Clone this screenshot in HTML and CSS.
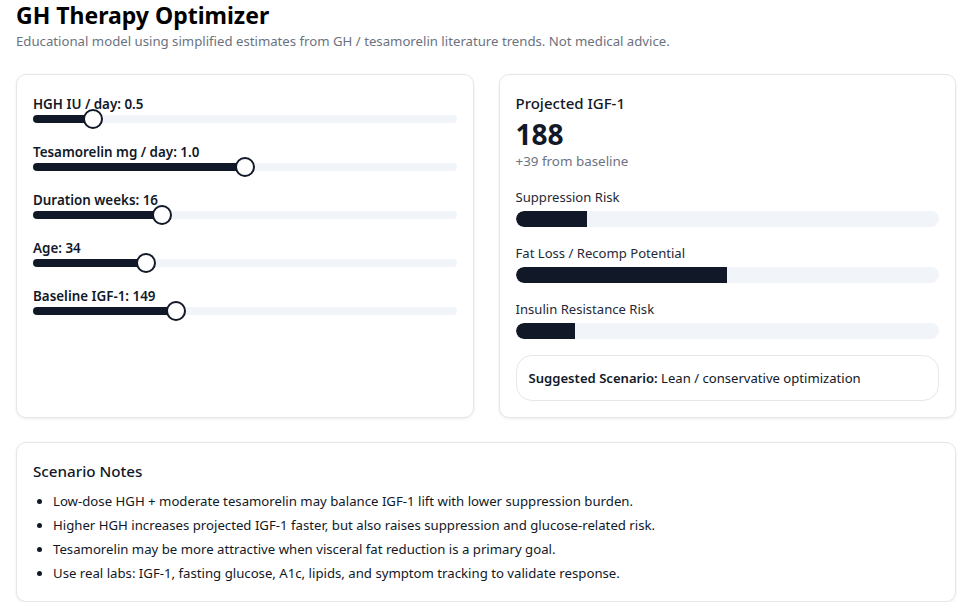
FILE: index.html
```html
<!DOCTYPE html>
<html>
<head>
<meta charset="utf-8">
<title>GH Therapy Optimizer</title>
<link rel="stylesheet" href="styles.css">
</head>
<body>
<div class="page">
	<h1>GH Therapy Optimizer</h1>
	<p class="sub">Educational model using simplified estimates from GH / tesamorelin literature trends. Not medical advice.</p>

	<div class="grid">
		<div class="card controls">
			<div class="field">
				<label>HGH IU / day: 0.5</label>
				<input type="range" min="0" max="4" step="0.1" value="0.5" style="--fill: 12.5%">
			</div>
			<div class="field">
				<label>Tesamorelin mg / day: 1.0</label>
				<input type="range" min="0" max="2" step="0.1" value="1" style="--fill: 50%">
			</div>
			<div class="field">
				<label>Duration weeks: 16</label>
				<input type="range" min="1" max="52" value="16" style="--fill: 29.4%">
			</div>
			<div class="field">
				<label>Age: 34</label>
				<input type="range" min="20" max="75" value="34" style="--fill: 25.5%">
			</div>
			<div class="field">
				<label>Baseline IGF-1: 149</label>
				<input type="range" min="50" max="350" value="149" style="--fill: 33%">
			</div>
		</div>

		<div class="card result">
			<h2>Projected IGF-1</h2>
			<div class="big">188</div>
			<div class="delta">+39 from baseline</div>

			<div class="metric">
				<div class="metric-label">Suppression Risk</div>
				<div class="bar"><div class="bar-fill" style="width: 17%"></div></div>
			</div>
			<div class="metric">
				<div class="metric-label">Fat Loss / Recomp Potential</div>
				<div class="bar"><div class="bar-fill" style="width: 50%"></div></div>
			</div>
			<div class="metric">
				<div class="metric-label">Insulin Resistance Risk</div>
				<div class="bar"><div class="bar-fill" style="width: 14%"></div></div>
			</div>

			<div class="scenario"><b>Suggested Scenario:</b> Lean / conservative optimization</div>
		</div>
	</div>

	<div class="card notes">
		<h2>Scenario Notes</h2>
		<ul>
			<li>Low-dose HGH + moderate tesamorelin may balance IGF-1 lift with lower suppression burden.</li>
			<li>Higher HGH increases projected IGF-1 faster, but also raises suppression and glucose-related risk.</li>
			<li>Tesamorelin may be more attractive when visceral fat reduction is a primary goal.</li>
			<li>Use real labs: IGF-1, fasting glucose, A1c, lipids, and symptom tracking to validate response.</li>
		</ul>
	</div>
</div>
</body>
</html>
```

FILE: styles.css
```css
body {
	margin: 0;
	background: #fff;
	color: #111827;
	font-family: "Noto Sans", "Open Sans", sans-serif;
}
.page {
	width: 940px;
	margin-left: 16px;
}

h1 {
	margin: 0;
	font-size: 23px;
	line-height: 31px;
	font-weight: 700;
	color: #000;
}
.sub {
	margin: 0;
	font-size: 13.2px;
	line-height: 20px;
	color: #6b7280;
}

.grid {
	display: grid;
	grid-template-columns: 1fr 1fr;
	gap: 25px;
	margin-top: 23px;
}
.card {
	background: #fff;
	border: 1px solid #e5e7eb;
	border-radius: 10px;
	box-shadow: 0 1px 3px rgba(0, 0, 0, 0.08);
	padding: 16px;
}

/* sliders */
.controls {
	padding-top: 19px;
}
.field {
	margin-bottom: 19px;
}
.field label {
	display: block;
	font-size: 13.4px;
	line-height: 20px;
	font-weight: 600;
}
.field input {
	-webkit-appearance: none;
	appearance: none;
	display: block;
	width: 100%;
	height: 8px;
	margin: 1px 0 0;
	border-radius: 4px;
	background: linear-gradient(to right, #111827 var(--fill), #f1f5f9 var(--fill));
}
.field input::-webkit-slider-thumb {
	-webkit-appearance: none;
	width: 20px;
	height: 20px;
	border-radius: 50%;
	background: #fff;
	border: 2px solid #111827;
	box-sizing: border-box;
}

/* results */
h2 {
	margin: 0;
	font-size: 15px;
	line-height: 24px;
	font-weight: 500;
}
.big {
	font-size: 28px;
	line-height: 36px;
	font-weight: 700;
	padding-top: 1px;
	height: 35px;
}
.delta {
	font-size: 13.4px;
	line-height: 20px;
	color: #6b7280;
}
.metric {
	margin-top: 16px;
}
.metric-label {
	font-size: 13.1px;
	line-height: 20px;
	color: #1f2937;
}
.bar {
	margin-top: 4px;
	height: 16px;
	border-radius: 8px;
	background: #f1f5f9;
	overflow: hidden;
}
.bar-fill {
	height: 100%;
	background: #111827;
	border-radius: 8px 0 0 8px;
}
.scenario {
	margin-top: 16px;
	border: 1px solid #e5e7eb;
	border-radius: 16px;
	padding: 12px;
	font-size: 13.1px;
	line-height: 20px;
}
.scenario b {
	font-weight: 600;
}

/* notes */
.notes {
	margin-top: 24px;
}
.notes h2 {
	font-size: 15.2px;
}
.notes ul {
	margin: 6px 0 0;
	padding-left: 20px;
}
.notes li {
	font-size: 13.2px;
	line-height: 24px;
}
```
